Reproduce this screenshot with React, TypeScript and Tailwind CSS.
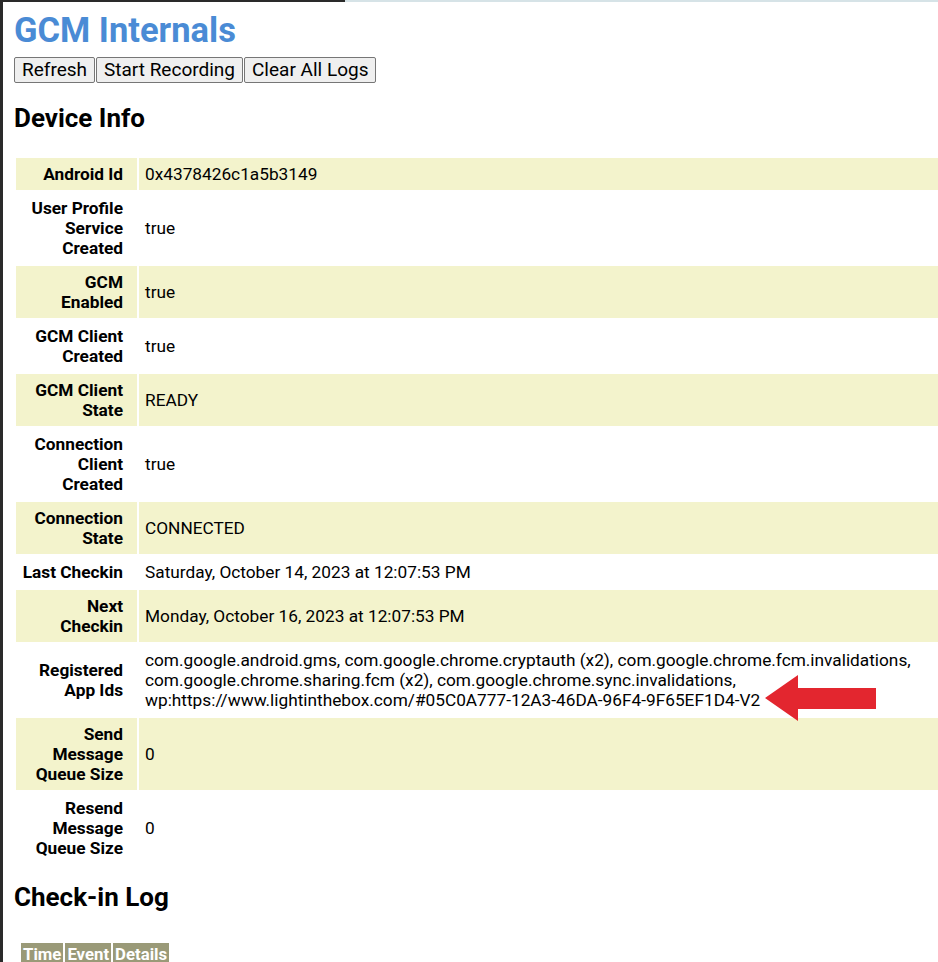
import React from 'react'

type Row = { label: string[]; value: React.ReactNode }

const rows: Row[] = [
  { label: ['Android Id'], value: '0x4378426c1a5b3149' },
  { label: ['User Profile', 'Service', 'Created'], value: 'true' },
  { label: ['GCM', 'Enabled'], value: 'true' },
  { label: ['GCM Client', 'Created'], value: 'true' },
  { label: ['GCM Client', 'State'], value: 'READY' },
  { label: ['Connection', 'Client', 'Created'], value: 'true' },
  { label: ['Connection', 'State'], value: 'CONNECTED' },
  { label: ['Last Checkin'], value: 'Saturday, October 14, 2023 at 12:07:53 PM' },
  { label: ['Next', 'Checkin'], value: 'Monday, October 16, 2023 at 12:07:53 PM' },
  {
    label: ['Registered', 'App Ids'],
    value:
      'com.google.android.gms, com.google.chrome.cryptauth (x2), com.google.chrome.fcm.invalidations, com.google.chrome.sharing.fcm (x2), com.google.chrome.sync.invalidations, wp:https://www.lightinthebox.com/#05C0A777-12A3-46DA-96F4-9F65EF1D4-V2',
  },
  { label: ['Send', 'Message', 'Queue Size'], value: '0' },
  { label: ['Resend', 'Message', 'Queue Size'], value: '0' },
]

function Arrow() {
  // red annotation arrow pointing at the last app id
  return (
    <svg className="absolute left-[760px] top-[670px]" width="122" height="56" viewBox="760 670 122 56">
      <polygon points="765,698 798,675 798,688 876,688 876,709 798,709 798,721" fill="#e3262f" />
    </svg>
  )
}

export default function App() {
  return (
    <div className="relative min-h-[962px] w-[938px] overflow-hidden bg-white font-['Roboto',sans-serif] text-black">
      {/* window chrome edges */}
      <div className="flex h-[2px]">
        <div className="w-[345px] bg-[#2a2a2a]" />
        <div className="flex-1 bg-[#d6e3e7]" />
      </div>
      <div className="flex min-h-[960px]">
        <div className="w-[3px] shrink-0 bg-[#2a2a2a]" />
        <div className="flex-1 pl-[11px]">
          <h1 className="mt-[8px] text-[34.5px] font-bold leading-[40px] text-[#4a8bd5]">GCM Internals</h1>
          <div className="mt-[7px] flex gap-[1px]">
            {['Refresh', 'Start Recording', 'Clear All Logs'].map(b => (
              <button
                key={b}
                className="rounded-[2px] border border-[#767676] bg-[#efefef] px-[7px] py-[2px] text-[19px] leading-[20px] text-black"
              >
                {b}
              </button>
            ))}
          </div>

          <h2 className="mt-[20px] text-[26px] font-bold leading-[30px]">Device Info</h2>
          <table className="mt-[23px] w-[930px] border-separate border-spacing-[2px] text-[17.25px] leading-[20px]">
            <tbody>
              {rows.map((r, i) => (
                <tr key={i} className={i % 2 === 0 ? 'bg-[#f3f3cc]' : ''}>
                  <th className="w-[121px] py-[6px] pr-[14px] text-right align-middle font-bold">
                    {r.label.map((l, j) => (
                      <div key={j}>{l}</div>
                    ))}
                  </th>
                  <td className="py-[6px] pl-[6px] pr-[6px] text-left align-middle">{r.value}</td>
                </tr>
              ))}
            </tbody>
          </table>

          <h2 className="mt-[16px] text-[26px] font-bold leading-[30px]">Check-in Log</h2>
          <table className="ml-[5px] mt-[29px] border-separate border-spacing-[2px] text-[16.75px] leading-[20px]">
            <thead>
              <tr>
                {['Time', 'Event', 'Details'].map(h => (
                  <th key={h} className="bg-[#9a9a78] px-[2px] py-[1px] font-bold text-white">
                    {h}
                  </th>
                ))}
              </tr>
            </thead>
          </table>
        </div>
      </div>
      <Arrow />
    </div>
  )
}
